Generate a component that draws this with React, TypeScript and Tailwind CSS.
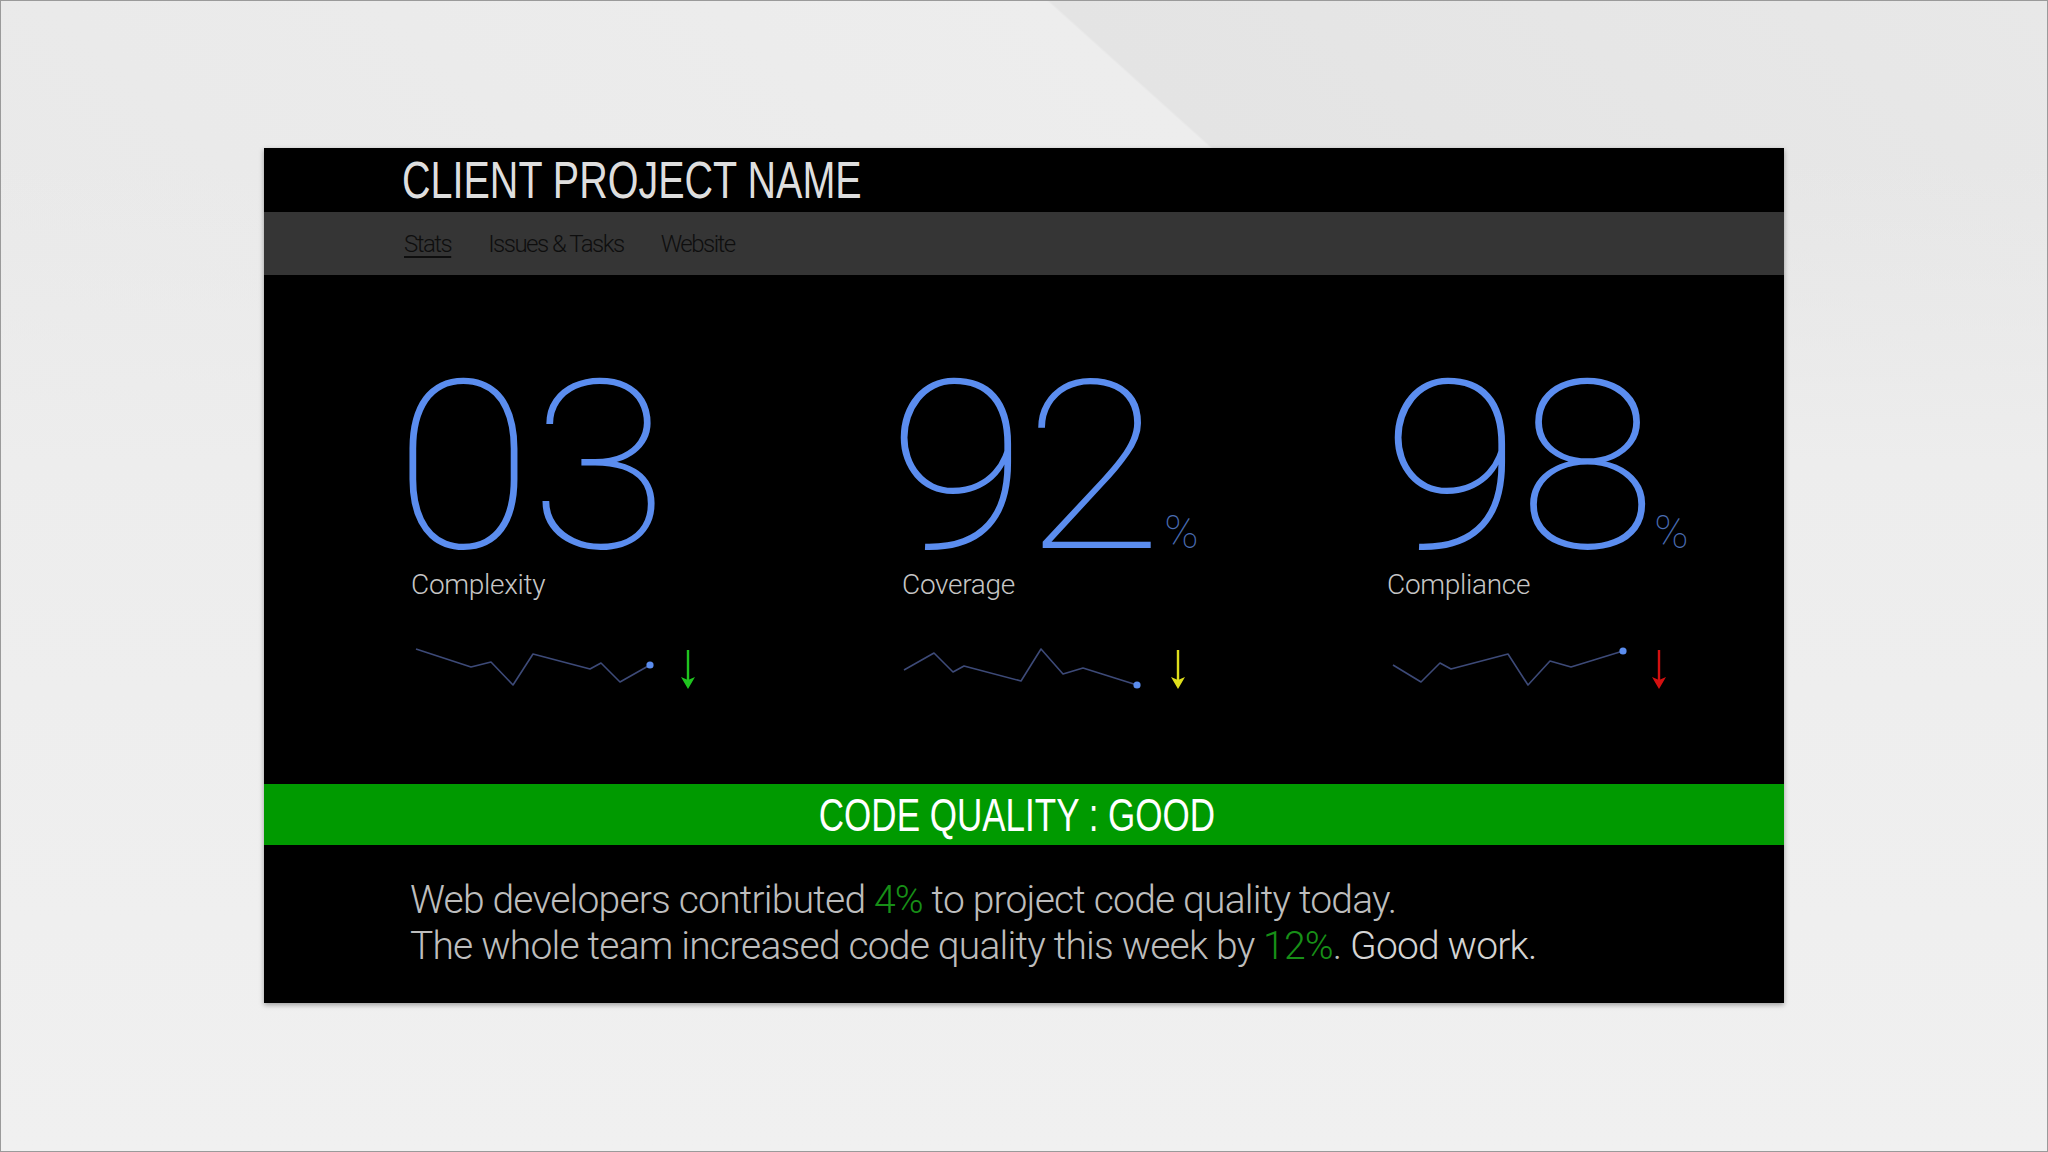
import React from 'react';

type Stat = {
  value: string;
  unit?: string;
  unitMl: string;
  label: string;
  labelMl: string;
  points: [number, number][];
  arrow: string;
  arrowX: number;
};

const stats: Stat[] = [
  {
    value: '03',
    unitMl: 'ml-[22px]',
    label: 'Complexity',
    labelMl: 'ml-[17px]',
    points: [[11, 8], [66, 26], [86, 21], [108, 44], [128, 13], [185, 28], [196, 22], [215, 41], [245, 24]],
    arrow: '#1fc41f',
    arrowX: 283,
  },
  {
    value: '92',
    unit: '%',
    unitMl: 'ml-[25px]',
    label: 'Coverage',
    labelMl: 'ml-[14px]',
    points: [[5, 29], [35, 12], [54, 31], [65, 25], [122, 40], [142, 8], [164, 33], [184, 27], [238, 44]],
    arrow: '#dede1c',
    arrowX: 279,
  },
  {
    value: '98',
    unit: '%',
    unitMl: 'ml-[21px]',
    label: 'Compliance',
    labelMl: 'ml-[5px]',
    points: [[0, 24], [28, 41], [47, 22], [58, 28], [115, 13], [135, 44], [157, 20], [178, 26], [230, 10]],
    arrow: '#d41010',
    arrowX: 266,
  },
];

const Sparkline: React.FC<{ points: [number, number][]; arrow: string; arrowX: number }> = ({ points, arrow, arrowX }) => {
  const last = points[points.length - 1];
  return (
    <svg width="300" height="56" viewBox="0 0 300 56" className="block overflow-visible">
      <polyline
        points={points.map(p => p.join(',')).join(' ')}
        fill="none"
        stroke="#3d4a78"
        strokeWidth="1.6"
        strokeLinejoin="round"
      />
      <circle cx={last[0]} cy={last[1]} r="3.6" fill="#5b8def" />
      <line x1={arrowX} y1={9} x2={arrowX} y2={40} stroke={arrow} strokeWidth="2.4" />
      <path d={`M${arrowX - 7} 36 L${arrowX} 48 L${arrowX + 7} 36 L${arrowX} 39 Z`} fill={arrow} />
    </svg>
  );
};

const App: React.FC = () => {
  return (
    <div className="w-full h-[1152px] overflow-hidden border border-[#9a9a9a] pt-[147px] pl-[263px] bg-[linear-gradient(to_bottom,rgba(237,237,237,0)_0%,rgba(237,237,237,0)_14%,#ededed_40%,#f0f0f0_100%),linear-gradient(42deg,#e6e6e6_0%,#ededed_69.9%,#e4e4e4_70%,#e8e8e8_100%)]">
      <div className="w-[1520px] h-[855px] bg-black flex flex-col shadow-[0_2px_5px_rgba(0,0,0,0.35)]">
        {/* header */}
        <div className="h-[64px] flex items-center pl-[138px]">
          <h1 className="origin-left scale-x-[0.76] whitespace-nowrap text-[52px] leading-none text-[#dedede] [font-family:'Liberation_Sans',Arial,sans-serif]">
            CLIENT PROJECT NAME
          </h1>
        </div>

        {/* nav */}
        <nav className="h-[63px] bg-[#353535] flex items-center pl-[140px] gap-[37px] pt-[1px] text-[24px] tracking-[-1.5px] text-[#0e0e0e] font-light [font-family:Roboto,sans-serif]">
          <span className="underline decoration-[1.5px] underline-offset-[4px]">Stats</span>
          <span>Issues &amp; Tasks</span>
          <span>Website</span>
        </nav>

        {/* stats */}
        <div className="h-[509px] flex pt-[103px] pl-[130px] [font-family:Roboto,sans-serif]">
          {stats.map(s => (
            <div key={s.label} className="w-[494px] shrink-0 flex flex-col">
              <div className="flex items-baseline">
                <span className="inline-block origin-left scale-x-[1.08] text-[235px] leading-[180px] h-[180px] font-thin text-[#5b8def] tracking-[-3px]">
                  {s.value}
                </span>
                {s.unit && (
                  <span className={`${s.unitMl} text-[46px] leading-none font-thin text-[#4a6cb2]`}>{s.unit}</span>
                )}
              </div>
              <div className={`mt-[10px] ${s.labelMl} text-[28px] leading-[34px] tracking-[-0.3px] font-light text-[#c6c6c6]`}>
                {s.label}
              </div>
              <div className="mt-[39px] ml-[11px]">
                <Sparkline points={s.points} arrow={s.arrow} arrowX={s.arrowX} />
              </div>
            </div>
          ))}
        </div>

        {/* status bar */}
        <div className="h-[61px] bg-[#009a00] flex items-center justify-center pr-[14px]">
          <span className="inline-block scale-x-[0.745] whitespace-nowrap text-[47px] leading-none text-white [font-family:'Liberation_Sans',Arial,sans-serif]">
            CODE QUALITY : GOOD
          </span>
        </div>

        {/* summary */}
        <div className="flex-1 pt-[32px] pl-[146px] text-[39px] leading-[46px] tracking-[-0.8px] font-light text-[#bdbdbd] [font-family:Roboto,sans-serif]">
          <p>
            Web developers contributed <span className="text-[#178f17]">4%</span> to project code quality today.
          </p>
          <p>
            The whole team increased code quality this week by <span className="text-[#178f17]">12%</span>.{' '}
            <span className="text-[#d4d4d4]">Good work.</span>
          </p>
        </div>
      </div>
    </div>
  );
};

export default App;
